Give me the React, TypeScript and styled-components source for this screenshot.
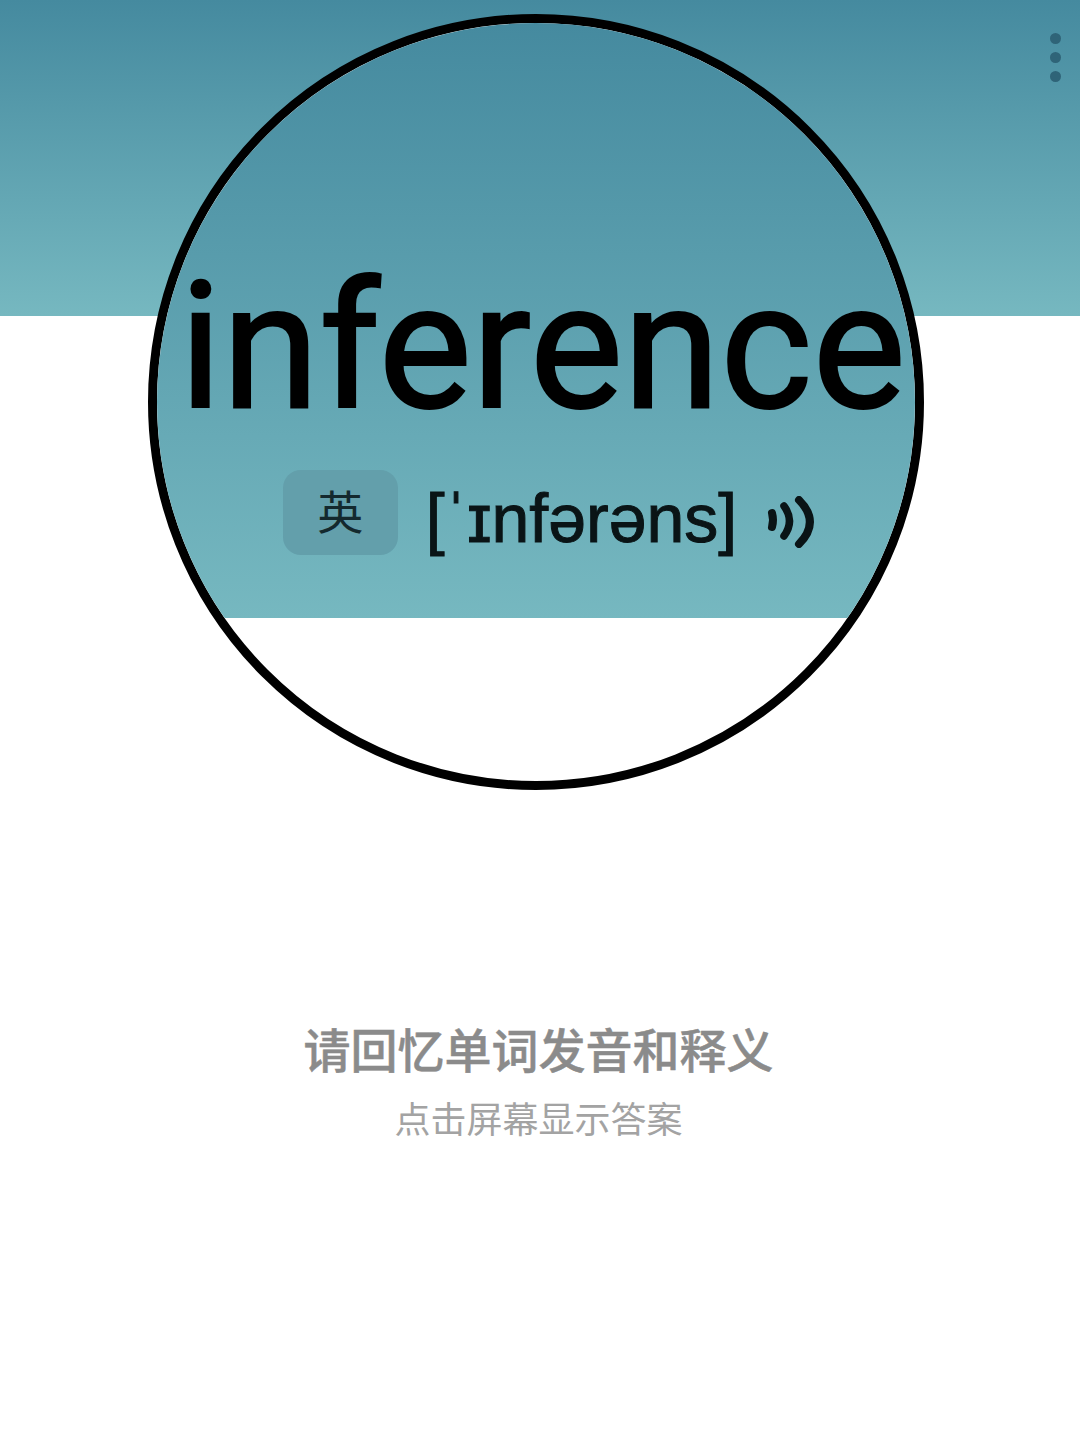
import React from "react";
import styled, { createGlobalStyle } from "styled-components";

const GlobalStyle = createGlobalStyle`
  html, body {
    margin: 0;
    padding: 0;
    background: #fff;
  }
`;

const App = () => {
  return (
    <Page>
      <GlobalStyle />
      <Header>
        <MenuButton>
          <MenuDot />
          <MenuDot />
          <MenuDot />
        </MenuButton>
      </Header>
      <Lens>
        <LensBand>
          <Word>inference</Word>
          <PhoneticRow>
            <AccentBadge>英</AccentBadge>
            <Phonetic>[ˈɪnfərəns]</Phonetic>
            <SpeakerIcon viewBox="0 0 52 52">
              <path d="M7 17 Q9 24 7 31" strokeWidth="8" />
              <path d="M19 10 Q30 25 19 40" strokeWidth="7.5" />
              <path d="M34 4 Q56 26 34 48" strokeWidth="8" />
            </SpeakerIcon>
          </PhoneticRow>
        </LensBand>
      </Lens>
      <Prompt>
        <PromptTitle>请回忆单词发音和释义</PromptTitle>
        <PromptHint>点击屏幕显示答案</PromptHint>
      </Prompt>
    </Page>
  );
};

export default App;

const Page = styled.div`
  position: relative;
  width: 1080px;
  height: 1440px;
  overflow: hidden;
  background: #fff;
  font-family: "Liberation Sans", "Noto Sans CJK SC", sans-serif;
`;

const Header = styled.div`
  display: flex;
  justify-content: flex-end;
  height: 316px;
  padding: 33px 19px 0 0;
  box-sizing: border-box;
  background: linear-gradient(180deg, #458a9f 0%, #76b8c0 100%);
`;

const MenuButton = styled.div`
  display: flex;
  flex-direction: column;
  gap: 8px;
`;

const MenuDot = styled.span`
  width: 11px;
  height: 11px;
  border-radius: 50%;
  background: #2f6478;
`;

const Lens = styled.div`
  position: absolute;
  left: 148px;
  top: 14px;
  width: 776px;
  height: 776px;
  box-sizing: border-box;
  border: 9px solid #000;
  border-radius: 50%;
  overflow: hidden;
  background: #fff;
`;

const LensBand = styled.div`
  display: flex;
  flex-direction: column;
  align-items: center;
  height: 595px;
  padding-left: 17px;
  box-sizing: border-box;
  background: linear-gradient(180deg, #458a9f 0%, #76b8c0 100%);
`;

const Word = styled.div`
  margin: 224px 4px 0 0;
  font-family: Roboto, "Liberation Sans", sans-serif;
  font-size: 176px;
  line-height: 200px;
  color: #000;
  -webkit-text-stroke: 2px #000;
  white-space: nowrap;
`;

const PhoneticRow = styled.div`
  display: flex;
  align-items: flex-start;
  margin: 23px 0 0 11px;
`;

const AccentBadge = styled.div`
  display: flex;
  align-items: center;
  justify-content: center;
  width: 115px;
  height: 85px;
  border-radius: 18px;
  background: #639fab;
  color: #14292e;
  font-size: 46px;
  line-height: 78px;
`;

const Phonetic = styled.div`
  margin-left: 28px;
  padding-top: 6px;
  font-size: 68px;
  line-height: 85px;
  color: #0a1416;
  -webkit-text-stroke: 1px #0a1416;
  white-space: nowrap;
`;

const SpeakerIcon = styled.svg`
  width: 52px;
  height: 52px;
  margin: 26px 0 0 28px;
  fill: none;
  stroke: #0a1416;
  stroke-linecap: round;
`;

const Prompt = styled.div`
  display: flex;
  flex-direction: column;
  align-items: center;
  margin-top: 702px;
  padding-right: 3px;
`;

const PromptTitle = styled.div`
  font-size: 47px;
  line-height: 68px;
  font-weight: 500;
  color: #8b8b8b;
  -webkit-text-stroke: 0.5px #8b8b8b;
`;

const PromptHint = styled.div`
  margin-top: 11px;
  font-size: 36px;
  line-height: 48px;
  color: #a3a3a3;
`;
